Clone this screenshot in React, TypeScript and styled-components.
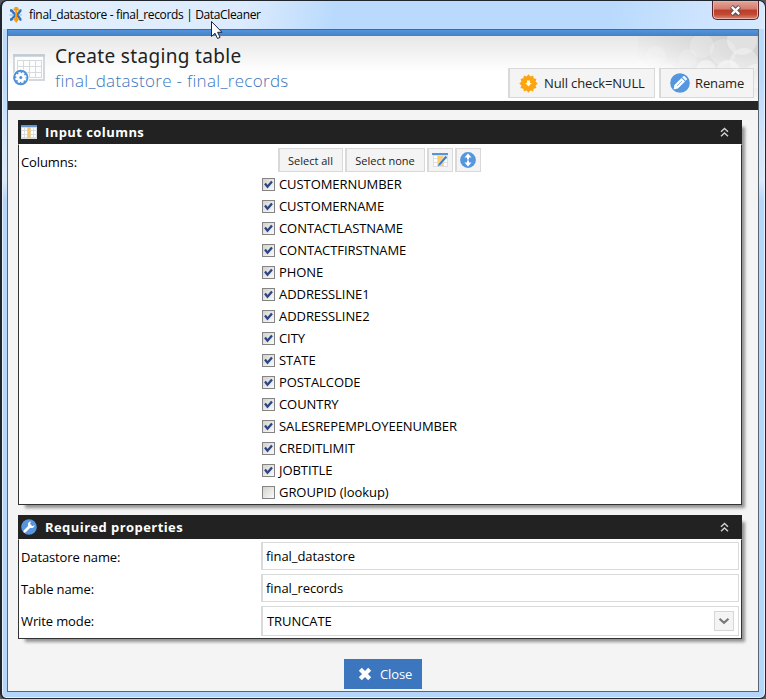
import React from "react";
import styled, { createGlobalStyle } from "styled-components";

const Global = createGlobalStyle`
  * { box-sizing: border-box; }
  body { margin: 0; background: #55585c; overflow: hidden; }
`;

const Frame = styled.div`
  position: relative;
  width: 766px;
  height: 699px;
  padding: 0 6px 6px 5px;
  display: flex;
  flex-direction: column;
  border: 1px solid #20242c;
  border-left-width: 2px;
  border-radius: 7px 7px 6px 6px;
  background: linear-gradient(180deg, #b9dafd 0, #b9dafd 80px, #d6e7fb 150px, #dbe9fb 180px, #b5d6fb 200px, #b4d6fa 100%);
  box-shadow: inset 0 0 0 1px #e4f1fd;
  font-family: "Open Sans", "Noto Sans", sans-serif;
  font-size: 13px;
  letter-spacing: -0.07px;
  color: #000;
`;

const TitleBar = styled.div`
  height: 28px;
  flex: none;
  display: flex;
  align-items: flex-start;
  margin: 0 -5px 0 -4px;
  padding-left: 5px;
  border-radius: 6px 6px 0 0;
  background: linear-gradient(100deg, #e3f0fe 0, #dcebfd 240px, #b9dafd 330px, #b9dafd 600px, #cde4fe 690px, #d6e9fe 100%);
`;

const TitleIcon = styled.svg`
  margin: 5px 5px 0 0;
`;

const TitleText = styled.div`
  font-size: 12px;
  line-height: 18px;
  margin-top: 5px;
  letter-spacing: -0.35px;
  white-space: nowrap;
`;

const CloseBox = styled.div`
  margin-left: auto;
  margin-right: 5px;
  width: 47px;
  height: 19px;
  display: flex;
  align-items: center;
  justify-content: center;
  border: 1px solid #5a2426;
  border-top: 0;
  border-radius: 0 0 5px 5px;
  box-shadow: inset 0 0 0 1px #eab0a5;
  background: linear-gradient(180deg, #e5a598 0, #d27c6d 45%, #bb3c29 50%, #c24a35 75%, #dd8c72 100%);
`;

const Client = styled.div`
  flex: 1;
  display: flex;
  flex-direction: column;
  border: 1px solid #5b6570;
  background: #f4f4f4;
`;

const Stripe = styled.div`
  height: 6px;
  flex: none;
  background: linear-gradient(180deg, #5294de, #4581c4);
`;

const Banner = styled.div`
  position: relative;
  height: 65px;
  flex: none;
  display: flex;
  background: linear-gradient(180deg, #e7e7e7 0, #fff 36px);
`;

const Bokeh = styled.svg`
  position: absolute;
  right: 0;
  top: 0;
`;

const BannerIcon = styled.svg`
  margin: 18px 9px 0 5px;
  flex: none;
`;

const Heading = styled.div`
  flex: 1;
  white-space: nowrap;
`;

const Title = styled.div`
  font-family: "Noto Sans", sans-serif;
  font-size: 19px;
  line-height: 24px;
  margin-top: 8px;
  letter-spacing: 0.34px;
  color: #222;
`;

const Subtitle = styled.div`
  font-size: 17px;
  font-weight: 300;
  line-height: 24px;
  margin-top: 1px;
  letter-spacing: 0.31px;
  color: #3b76c0;
`;

const BannerActions = styled.div`
  position: relative;
  display: flex;
  gap: 4px;
  margin: 32px 4px 0 0;
`;

const Button = styled.button<{ $w: number; $h: number; $size?: number; $gap?: number; $pad?: number }>`
  width: ${(p) => p.$w}px;
  height: ${(p) => p.$h}px;
  display: flex;
  align-items: center;
  justify-content: ${(p) => (p.$pad ? "flex-start" : "center")};
  gap: ${(p) => p.$gap ?? 0}px;
  padding: 0 ${(p) => (p.$pad ? 0 : 1)}px 0 ${(p) => p.$pad ?? 0}px;
  border: 1px solid #d9d9d9;
  border-left-width: 2px;
  background: #f4f4f4;
  font: ${(p) => p.$size ?? 13}px "Open Sans", sans-serif;
  letter-spacing: ${(p) => (p.$pad ? -0.12 : 0)}px;
  color: #222;
  white-space: nowrap;
`;

const Rule = styled.div`
  height: 9px;
  flex: none;
  background: #262626;
`;

const Body = styled.div`
  flex: 1;
  display: flex;
  flex-direction: column;
  gap: 10px;
  padding: 10px 16px 0 10px;
`;

const Panel = styled.section<{ $h: number }>`
  height: ${(p) => p.$h}px;
  display: flex;
  flex-direction: column;
  box-shadow: 5px 5px 3px -2px rgba(0, 0, 0, 0.4);
`;

const PanelHead = styled.header`
  height: 24px;
  flex: none;
  display: flex;
  align-items: center;
  padding: 0 12px 0 3px;
  background: #222;
  color: #fff;
  font-weight: 700;
  letter-spacing: 0.43px;
`;

const PanelName = styled.span`
  flex: 1;
  margin-left: 8px;
`;

const PanelBody = styled.div`
  flex: 1;
  display: flex;
  flex-direction: column;
  border: 1px solid #333;
  border-top-color: #fff;
  background: #fff;
  padding: 0 2px;
`;

const Row = styled.div<{ $top: number }>`
  display: grid;
  grid-template-columns: 240px 1fr;
  margin-top: ${(p) => p.$top}px;
`;

const Label = styled.label<{ $top: number }>`
  line-height: 18px;
  padding-top: ${(p) => p.$top}px;
  letter-spacing: -0.12px;
`;

const ColumnArea = styled.div`
  display: flex;
  flex-direction: column;
`;

const Tools = styled.div`
  display: flex;
  gap: 2px;
  margin: 0 0 1px 17px;
`;

const Check = styled.label`
  height: 22px;
  display: flex;
  align-items: center;
  gap: 4px;
  padding-left: 1px;
  white-space: nowrap;
`;

const Box = styled.span`
  width: 13px;
  height: 13px;
  display: flex;
  border: 1px solid #848484;
  background: linear-gradient(135deg, #d4d2cd, #fafafa);
`;

const Field = styled.div<{ $h: number; $pad: number }>`
  height: ${(p) => p.$h}px;
  display: flex;
  align-items: center;
  justify-content: space-between;
  border: 1px solid #dadada;
  border-left-width: 2px;
  background: #fff;
  padding: 0 4px 0 ${(p) => p.$pad}px;
`;

const Drop = styled.span`
  width: 20px;
  height: 20px;
  display: flex;
  align-items: center;
  justify-content: center;
  border: 1px solid #d6d6d6;
  background: #f4f4f4;
`;

const CloseButton = styled.button`
  align-self: center;
  width: 78px;
  height: 30px;
  margin: 10px -6px 0 0;
  display: flex;
  align-items: center;
  gap: 8px;
  padding: 0 0 0 14px;
  border: 0;
  background: #3b76bf;
  color: #fff;
  font: 13px "Open Sans", sans-serif;
  letter-spacing: -0.1px;
`;

const Cursor = styled.svg`
  position: absolute;
  left: 208px;
  top: 19px;
`;

const Chevrons = () => (
  <svg width="11" height="12" viewBox="0 0 11 12" fill="none" stroke="#cfcfcf" strokeWidth="1.5">
    <path d="M2 5.700 5.500 2.500l3.500 3.200M2 10.200l3.500-3.200 3.500 3.200" />
  </svg>
);

const TableIcon = () => (
  <svg width="16" height="14" viewBox="0 0 16 14">
    <path fill="#d9dcdf" d="M0 0h16v14H0z" />
    <path fill="#6594cd" d="M0 0h16v2H0z" />
    <path fill="#fff" d="M1 3h2v2H1zM4 3h2v2H4zM1 6h2v3H1zM4 6h2v3H4zM1 10h2v2H1zM4 10h2v2H4zM10 3h2v2h-2zM13 3h2v2h-2zM10 6h2v3h-2zM13 6h2v3h-2zM10 10h2v2h-2zM13 10h2v2h-2z" />
    <path fill="#f5c66e" d="M6.500 2h3v11h-3z" />
  </svg>
);

const WrenchIcon = () => (
  <svg width="16" height="16" viewBox="0 0 16 16">
    <circle cx="8" cy="8" r="7.800" fill="#5596de" />
    <path d="M3.800 12.200 9.300 6.700" stroke="#fff" strokeWidth="2.700" strokeLinecap="round" />
    <path d="M10 2.500A3.300 3.300 0 1 0 13.500 6l-2 1.200-2-.5-.4-2z" fill="#fff" />
  </svg>
);

const StarIcon = () => {
  const points = Array.from({ length: 24 }, (_, i) => {
    const r = i % 2 ? 7.3 : 9.2;
    const a = (i * Math.PI) / 12;
    return `${9.5 + r * Math.sin(a)},${9.5 - r * Math.cos(a)}`;
  }).join(" ");
  return (
    <svg width="19" height="19" viewBox="0 0 19 19">
      <polygon points={points} fill="#fda50f" />
      <path fill="#fff" d="M8 6.500h3v2.500h1.700l-3.200 3.600L6.300 9H8z" />
    </svg>
  );
};

const PencilIcon = () => (
  <svg width="20" height="20" viewBox="0 0 20 20">
    <circle cx="10" cy="10" r="9.800" fill="#5596de" />
    <path d="m3.600 16.400.8-4.400 7.100-7 3.500 3.500-7.100 7z" fill="#fff" />
    <path d="m12.200 4.300 1-1q.7-.6 1.400 0l2.100 2.100q.6.700 0 1.400l-1 1z" fill="#fff" />
    <path d="m7 12.900 5-5" stroke="#5596de" strokeWidth=".7" />
  </svg>
);

const EditTableIcon = () => (
  <svg width="17" height="15" viewBox="0 0 17 15">
    <path fill="#dedede" d="M1 1h15v13H1z" />
    <path fill="#fff" d="M2 3h3v2H2zM2 6h3v3H2zM2 10h3v3H2zM12 3h3v2h-3zM12 6h3v3h-3zM12 10h3v3h-3z" />
    <path fill="#ffce6c" d="M6 3h5v10H6z" />
    <path fill="#5794dc" d="M0 0h16v2H0z" />
    <path d="m5 14 1.500-3.500L13.500 2.500l2 1.700L8.300 12.500z" fill="#3f7fca" stroke="#fff" strokeWidth=".5" />
  </svg>
);

const MoveIcon = () => (
  <svg width="16" height="16" viewBox="0 0 16 16">
    <circle cx="8" cy="8" r="7.900" fill="#5596de" />
    <path fill="#fff" d="m8 1.500 3.500 4H9v5h2.500L8 14.500l-3.500-4H7v-5H4.500z" />
    <path stroke="#5596de" d="M6 8h4" />
  </svg>
);

const inputColumns = [
  "CUSTOMERNUMBER",
  "CUSTOMERNAME",
  "CONTACTLASTNAME",
  "CONTACTFIRSTNAME",
  "PHONE",
  "ADDRESSLINE1",
  "ADDRESSLINE2",
  "CITY",
  "STATE",
  "POSTALCODE",
  "COUNTRY",
  "SALESREPEMPLOYEENUMBER",
  "CREDITLIMIT",
  "JOBTITLE",
  "GROUPID (lookup)",
];

const circles: [number, number, number, number][] = [
  [64, 10, 12, 0.22], [50, 22, 9, 0.2], [85, 16, 13, 0.22],
  [104, 4, 15, 0.35], [106, 26, 14, 0.35], [30, 36, 8, 0.3], [68, 34, 10, 0.4],
  [90, 36, 12, 0.45], [18, 20, 10, 0.2], [46, 42, 9, 0.4], [118, 40, 12, 0.4],
];

export default function App() {
  return (
    <>
      <Global />
      <Frame>
        <TitleBar>
          <TitleIcon width="16" height="18" viewBox="0 0 16 18">
            <path d="M2 4.500h1.500L6.500 8v2L3.500 13.500H2M13.500 4.500H12.500L10 8v2l2.500 3.500h1" fill="none" stroke="#3674bd" strokeWidth="2.500" />
            <path d="M1.500 9H6M10.500 9H14" stroke="#8fbdec" strokeWidth="1" />
            <path d="M8.200 2v12M5.500 3.500h5.400" fill="none" stroke="#f79a13" strokeWidth="1.900" />
            <path d="M4.800 12.300h6.800L8.200 17zM6.500 1h3.400v2H6.500z" fill="#f79a13" />
          </TitleIcon>
          <TitleText>final_datastore - final_records | DataCleaner</TitleText>
          <CloseBox>
            <svg width="13" height="11" viewBox="0 0 13 11">
              <path d="m2.500 1.500 8 8m0-8-8 8" stroke="#4b4d59" strokeWidth="4.200" />
              <path d="m2.800 1.900 7.400 7.200m0-7.200L2.800 9.100" stroke="#fff" strokeWidth="2.300" />
            </svg>
          </CloseBox>
        </TitleBar>
        <Client>
          <Stripe />
          <Banner>
            <Bokeh width="120" height="65" viewBox="0 0 120 65">
              <defs>
                <linearGradient id="haze" x1="0" y1=".35" x2=".7" y2="0">
                  <stop offset="0" stopColor="#d4d4d4" stopOpacity="0" />
                  <stop offset="1" stopColor="#cfcfcf" stopOpacity=".9" />
                </linearGradient>
                <linearGradient id="fade" x1="0" y1="0" x2="0" y2="1">
                  <stop offset=".3" stopColor="#fff" stopOpacity="0" />
                  <stop offset="1" stopColor="#fff" stopOpacity=".75" />
                </linearGradient>
              </defs>
              <path d="M0 0h120v65H0z" fill="url(#haze)" />
              {circles.map(([x, y, r, o]) => (
                <circle key={`${x}-${y}`} cx={x} cy={y} r={r} fill="#fff" fillOpacity={o} />
              ))}
              <path d="M0 0h120v65H0z" fill="url(#fade)" />
            </Bokeh>
            <BannerIcon width="33" height="34" viewBox="0 0 33 34">
              <path d="M1 1h30v25H1z" fill="#fdfdfd" stroke="#d3d8dc" strokeWidth="2" />
              <path d="M0 1.500h32" stroke="#c0ccd3" strokeWidth="2.500" />
              <path d="M4 6.500h24M4 12.500h24M4 18.500h24M4 23.500h24M4.500 6v18M10.500 6v18M16.500 6v18M22.500 6v18M28.500 6v18" stroke="#d5dadd" fill="none" />
              <circle cx="7.800" cy="23.500" r="8.500" fill="#fff" />
              <circle cx="7.800" cy="23.500" r="6.700" fill="#fff" stroke="#5090d8" strokeWidth="2" />
              <circle cx="7.800" cy="23.500" r="5.200" fill="none" stroke="#5090d8" strokeWidth="1.600" strokeDasharray="1.600 2.484" strokeDashoffset=".8" />
              <circle cx="7.800" cy="23.500" r="1.500" fill="#5090d8" />
            </BannerIcon>
            <Heading>
              <Title>Create staging table</Title>
              <Subtitle>final_datastore - final_records</Subtitle>
            </Heading>
            <BannerActions>
              <Button $w={147} $h={30} $pad={9} $gap={6}><StarIcon />Null check=NULL</Button>
              <Button $w={95} $h={30} $pad={9} $gap={5}><PencilIcon />Rename</Button>
            </BannerActions>
          </Banner>
          <Rule />
          <Body>
            <Panel $h={385}>
              <PanelHead><TableIcon /><PanelName>Input columns</PanelName><Chevrons /></PanelHead>
              <PanelBody>
                <Row $top={3}>
                  <Label $top={5}>Columns:</Label>
                  <ColumnArea>
                    <Tools>
                      <Button $w={65} $h={24} $size={11}>Select all</Button>
                      <Button $w={80} $h={24} $size={11}>Select none</Button>
                      <Button $w={26} $h={24} aria-label="Edit columns"><EditTableIcon /></Button>
                      <Button $w={26} $h={24} aria-label="Reorder columns"><MoveIcon /></Button>
                    </Tools>
                    {inputColumns.map((name, i) => (
                      <Check key={name}>
                        <Box>
                          {i < 14 && (
                            <svg width="11" height="11" viewBox="0 0 11 11">
                              <path d="m2 4.500 2.500 3.200L9 2.500" fill="none" stroke="#2c4585" strokeWidth="2.300" />
                            </svg>
                          )}
                        </Box>
                        {name}
                      </Check>
                    ))}
                  </ColumnArea>
                </Row>
              </PanelBody>
            </Panel>
            <Panel $h={124}>
              <PanelHead><WrenchIcon /><PanelName>Required properties</PanelName><Chevrons /></PanelHead>
              <PanelBody>
                <Row $top={2}>
                  <Label $top={6}>Datastore name:</Label>
                  <Field $h={28} $pad={3}>final_datastore</Field>
                </Row>
                <Row $top={4}>
                  <Label $top={6}>Table name:</Label>
                  <Field $h={28} $pad={3}>final_records</Field>
                </Row>
                <Row $top={4}>
                  <Label $top={6}>Write mode:</Label>
                  <Field $h={30} $pad={4}>
                    TRUNCATE
                    <Drop>
                      <svg width="12" height="8" viewBox="0 0 12 8">
                        <path d="m1.500 1.800 4.500 4 4.500-4" fill="none" stroke="#777" strokeWidth="2.200" />
                      </svg>
                    </Drop>
                  </Field>
                </Row>
              </PanelBody>
            </Panel>
            <CloseButton>
              <svg width="14" height="14" viewBox="0 0 14 14">
                <path d="m2.300 2.300 9.400 9.400m0-9.400-9.400 9.400" stroke="#fff" strokeWidth="4.200" />
              </svg>
              Close
            </CloseButton>
          </Body>
        </Client>
        <Cursor width="14" height="22" viewBox="0 0 14 22">
          <path d="M1.500 1.500v15l3.500-3.300 2.500 5.300 2.600-1.200-2.500-5H12z" fill="#fff" stroke="#1c2640" />
        </Cursor>
      </Frame>
    </>
  );
}
